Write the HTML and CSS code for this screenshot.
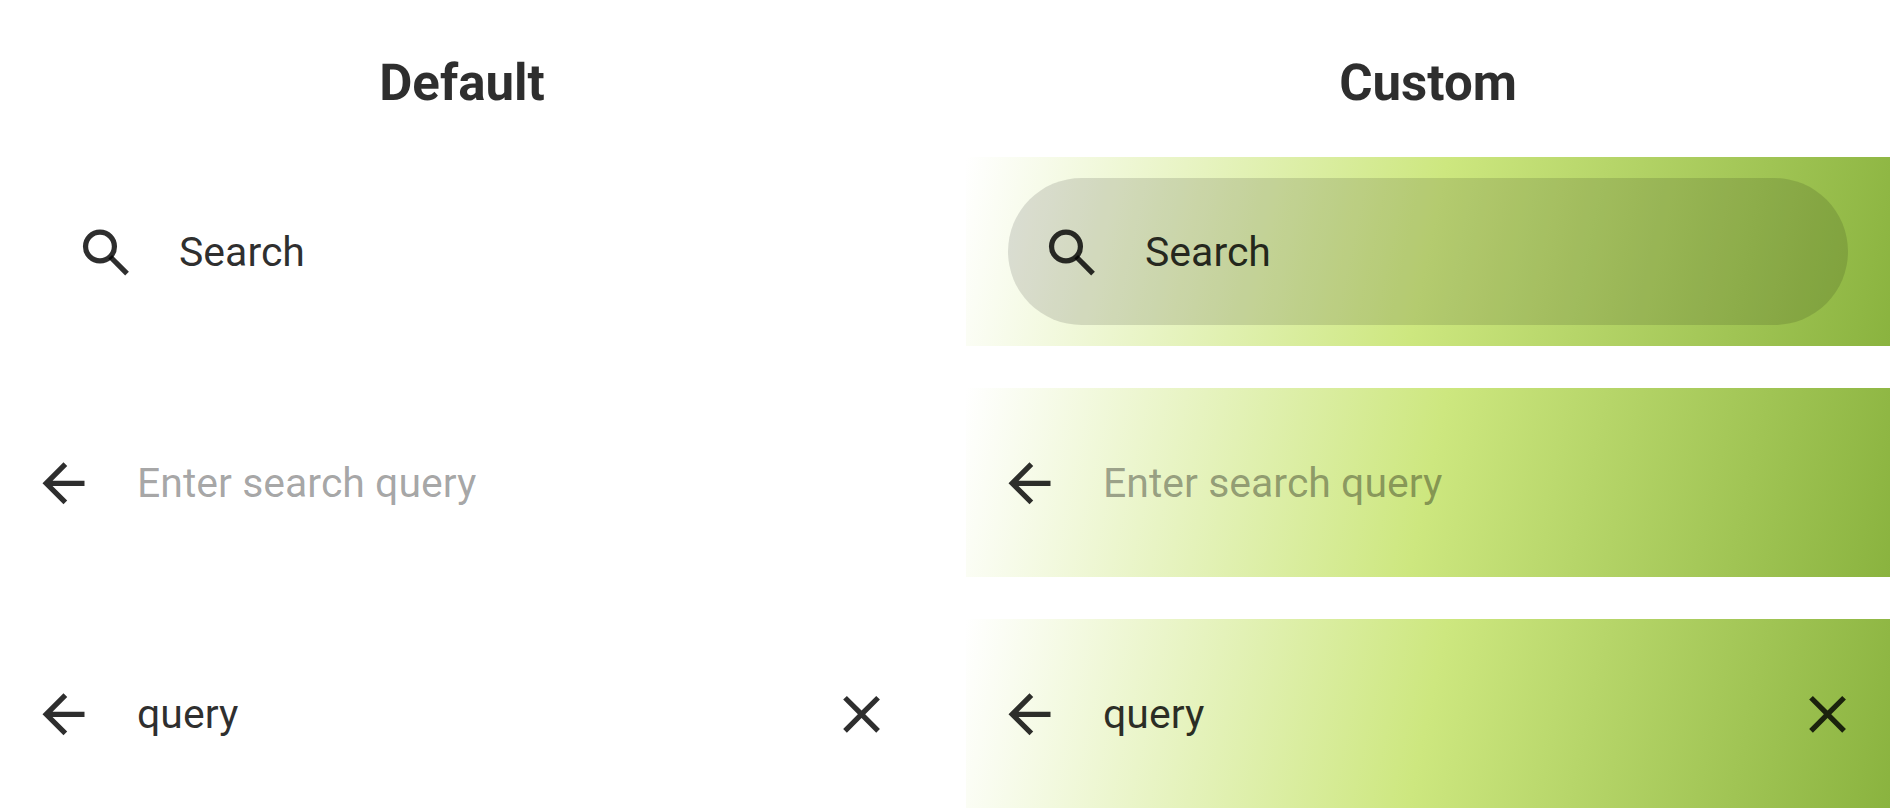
FILE: index.html
```html
<!DOCTYPE html>
<html lang="en">
<head>
<meta charset="utf-8">
<title>Search bar styles</title>
<link rel="stylesheet" href="styles.css">
</head>
<body>
<svg class="sprite" aria-hidden="true">
  <symbol id="search" viewBox="-0.4 -0.6 24 24"><g fill="none" stroke="currentColor" stroke-width="2"><circle cx="9.5" cy="9.5" r="5.5"/><path d="M13.4 13.4L19.8 19.8"/></g></symbol>
  <symbol id="back" viewBox="0 -0.3 24 24"><path d="M20 11H7.83l5.59-5.59L12 4l-8 8 8 8 1.41-1.41L7.83 13H20v-2z"/></symbol>
  <symbol id="close" viewBox="-0.4 -0.3 24 24"><path d="M19 6.41L17.59 5 12 10.59 6.41 5 5 6.41 10.59 12 5 17.59 6.41 19 12 13.41 17.59 19 19 17.59 13.41 12z"/></symbol>
</svg>
<main class="showcase">
  <section class="column">
    <h1 class="title">Default</h1>
    <div class="bar">
      <button class="collapsed" type="button"><svg class="icon"><use href="#search"/></svg><span>Search</span></button>
    </div>
    <div class="bar">
      <button class="action" type="button" aria-label="Back"><svg class="icon"><use href="#back"/></svg></button>
      <input class="field" type="text" aria-label="Search query" placeholder="Enter search query">
    </div>
    <div class="bar">
      <button class="action" type="button" aria-label="Back"><svg class="icon"><use href="#back"/></svg></button>
      <input class="field" type="text" aria-label="Search query" value="query">
      <button class="action" type="button" aria-label="Clear"><svg class="icon"><use href="#close"/></svg></button>
    </div>
  </section>
  <section class="column custom">
    <h1 class="title">Custom</h1>
    <div class="bar">
      <button class="collapsed" type="button"><svg class="icon"><use href="#search"/></svg><span>Search</span></button>
    </div>
    <div class="bar">
      <button class="action" type="button" aria-label="Back"><svg class="icon"><use href="#back"/></svg></button>
      <input class="field" type="text" aria-label="Search query" placeholder="Enter search query">
    </div>
    <div class="bar">
      <button class="action" type="button" aria-label="Back"><svg class="icon"><use href="#back"/></svg></button>
      <input class="field" type="text" aria-label="Search query" value="query">
      <button class="action" type="button" aria-label="Clear"><svg class="icon"><use href="#close"/></svg></button>
    </div>
  </section>
</main>
</body>
</html>
```
FILE: styles.css
```css
* { box-sizing: border-box; }
body {
  margin: 0;
  background: #fff;
  color: rgba(0, 0, 0, 0.82);
  font-family: Roboto, "Liberation Sans", sans-serif;
  text-rendering: geometricPrecision;
}
.sprite { position: absolute; width: 0; height: 0; }
.showcase {
  display: grid;
  grid-template-columns: 1fr 1fr;
  gap: 42px;
}
.column {
  display: flex;
  flex-direction: column;
  gap: 42px;
  min-width: 0;
}
.title {
  margin: 0;
  padding-top: 53px;
  font-size: 51px;
  line-height: 62px;
  font-weight: 700;
  text-align: center;
}
.bar {
  display: flex;
  align-items: center;
  height: 189px;
  padding: 0 32px;
}
.custom .bar {
  background: linear-gradient(102deg, #fff 0%, #cde77f 50%, #8ab33f 100%);
}
.collapsed, .action, .field {
  border: 0;
  background: none;
  color: inherit;
  font: inherit;
  font-size: 41px;
}
.collapsed {
  display: flex;
  align-items: center;
  gap: 42px;
  flex: 1;
  height: 147px;
  margin: 0 10px;
  padding: 0 32px;
  border-radius: 74px;
}
.custom .collapsed { background: rgba(0, 0, 0, 0.12); }
.action { display: flex; padding: 0; }
.icon { width: 63px; height: 63px; fill: currentColor; }
.field {
  flex: 1;
  min-width: 0;
  padding: 0 42px;
  outline: 0;
}
.field::placeholder { color: rgba(0, 0, 0, 0.36); opacity: 1; }
```
